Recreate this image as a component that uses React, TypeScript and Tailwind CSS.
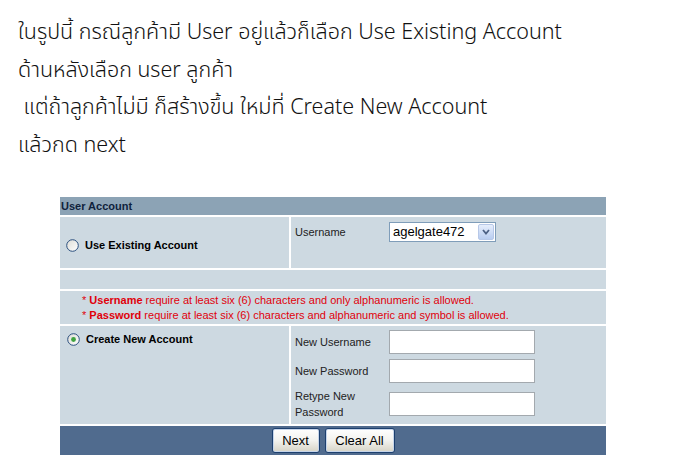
import React from 'react'

function Radio({ checked }: { checked?: boolean }) {
  return (
    <svg width="13" height="13" viewBox="0 0 13 13" className="shrink-0">
      <defs>
        <linearGradient id={checked ? 'rg1' : 'rg0'} x1="0" y1="0" x2="1" y2="1">
          <stop offset="0" stopColor="#dcdcd6" />
          <stop offset="1" stopColor="#ffffff" />
        </linearGradient>
      </defs>
      <circle cx="6.5" cy="6.5" r="5.8" fill={`url(#${checked ? 'rg1' : 'rg0'})`} stroke="#2a4f7e" strokeWidth="1" />
      {checked && <circle cx="6.5" cy="6.5" r="2.4" fill="#3fa33f" />}
    </svg>
  )
}

function Field({ label, two }: { label: string; two?: boolean }) {
  return (
    <div className={`flex items-center ${two ? 'h-[32px]' : 'h-[24px]'}`}>
      <div className="w-[94px] pr-2 text-[11px] leading-[16px] text-[#222]">{label}</div>
      <div className="w-[146px] h-[24px] bg-white border border-[#a3a9ae]" />
    </div>
  )
}

function XpButton({ children, w }: { children: React.ReactNode; w: string }) {
  return (
    <div
      className={`${w} h-[25px] flex items-center justify-center rounded-[3px] border border-[#1c3f6e] bg-gradient-to-b from-white via-[#f2f2ee] to-[#d6d3c6] text-[13px] text-black shadow-[inset_0_0_0_1px_#c6d5ea]`}
    >
      {children}
    </div>
  )
}

export default function App() {
  return (
    <div className="w-[698px] h-[468px] bg-white relative overflow-hidden" style={{ fontFamily: '"Liberation Sans", Arial, sans-serif' }}>
      <div
        className="pl-[18px] pt-[14px] text-[21.5px] leading-[37.5px] font-light text-[#111] whitespace-pre"
        style={{ fontFamily: '"Noto Sans Thai", Loma, Garuda, "Liberation Sans", sans-serif' }}
      >
        <div>ในรูปนี้ กรณีลูกค้ามี User อยู่แล้วก็เลือก Use Existing Account</div>
        <div>ด้านหลังเลือก user ลูกค้า</div>
        <div> แต่ถ้าลูกค้าไม่มี ก็สร้างขึ้น ใหม่ที่ Create New Account</div>
        <div>แล้วกด next</div>
      </div>

      <div className="absolute left-[60px] top-[197px] w-[546px] flex flex-col gap-[2px] bg-white">
        <div className="h-[18px] bg-[#8ca3b5] flex items-center pl-[1px] text-[11px] font-bold text-[#0f223c]">
          User Account
        </div>

        <div className="grid grid-cols-[229px_1fr] gap-[2px] h-[51px]">
          <div className="bg-[#cdd9e1] flex items-center pl-[6px] pt-[6px] gap-[6px]">
            <Radio />
            <span className="text-[11px] font-bold text-black">Use Existing Account</span>
          </div>
          <div className="bg-[#cdd9e1] flex items-start pl-[4px] pt-[5px]">
            <div className="w-[94px] pt-[3px] text-[11px] leading-[14px] text-[#222]">Username</div>
            <div className="flex h-[20px] w-[107px] border border-[#7f9db9] bg-white">
              <div className="flex-1 pl-[3px] text-[13px] leading-[18px] text-black">agelgate472</div>
              <div className="w-[16px] m-[1px] rounded-[2px] border border-[#b7c8e8] bg-gradient-to-b from-[#e6eefc] to-[#b9cdf0] flex items-center justify-center">
                <svg width="8" height="6" viewBox="0 0 8 6">
                  <path d="M1 1 L4 4.5 L7 1" fill="none" stroke="#4d6185" strokeWidth="1.8" />
                </svg>
              </div>
            </div>
          </div>
        </div>

        <div className="h-[19px] bg-[#cdd9e1]" />

        <div className="h-[33px] bg-[#cdd9e1] flex flex-col justify-center pl-[22px] text-[11px] leading-[15px] text-[#e0000b]">
          <div>* <b>Username</b> require at least six (6) characters and only alphanumeric is allowed.</div>
          <div>* <b>Password</b> require at least six (6) characters and alphanumeric and symbol is allowed.</div>
        </div>

        <div className="grid grid-cols-[229px_1fr] gap-[2px] h-[98px]">
          <div className="bg-[#cdd9e1] flex items-start pl-[7px] pt-[7px] gap-[6px]">
            <Radio checked />
            <span className="text-[11px] font-bold leading-[13px] text-black">Create New Account</span>
          </div>
          <div className="bg-[#cdd9e1] flex flex-col gap-[5px] pl-[4px] pt-[4px]">
            <Field label="New Username" />
            <Field label="New Password" />
            <Field label="Retype New Password" two />
          </div>
        </div>

        <div className="h-[29px] bg-[#506b8e] flex items-center justify-center gap-[5px]">
          <XpButton w="w-[48px]">Next</XpButton>
          <XpButton w="w-[70px]">Clear All</XpButton>
        </div>
      </div>
    </div>
  )
}
